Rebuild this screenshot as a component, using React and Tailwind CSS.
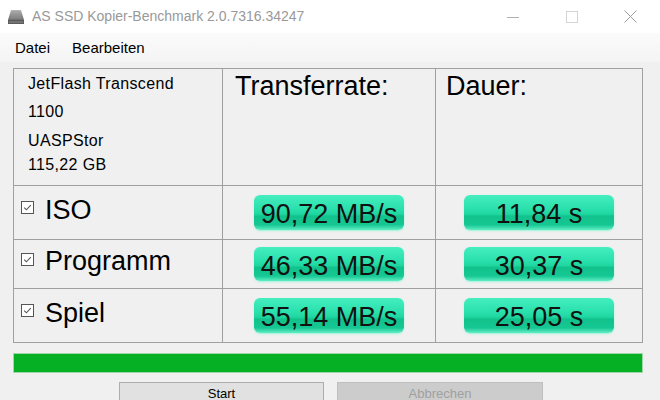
import React from "react";

const F = { fontFamily: '"Liberation Sans", Arial, sans-serif' };

function Check() {
  return (
    <svg width="13" height="13" viewBox="0 0 13 13" className="shrink-0 mb-[10px]">
      <rect x="0.5" y="0.5" width="12" height="12" fill="#ffffff" stroke="#555555" />
      <path d="M3.2 6.6 L5.4 8.8 L9.8 4.2" fill="none" stroke="#555555" strokeWidth="1.1" />
    </svg>
  );
}

function Pill({ children, h = "h-[35px]" }) {
  return (
    <div
      className={`w-[150px] ${h} rounded-[6px] flex items-center justify-center pt-[4px] text-[27px] leading-none text-[#111] whitespace-nowrap bg-[linear-gradient(to_bottom,#45eebf_0%,#2ae0ac_40%,#1fd6a0_55%,#12c28c_60%,#15c792_85%,#5fedc4_100%)] shadow-[0_1px_2px_#9ff3da]`}
    >
      {children}
    </div>
  );
}

function RowLabel({ text }) {
  return (
    <div className="bg-[#f0f0f0] flex items-center pl-[7px] gap-[11px]">
      <Check />
      <span className="text-[27px] leading-none text-black mb-[5px]">{text}</span>
    </div>
  );
}

function Cell({ children }) {
  return <div className="bg-[#f0f0f0] flex items-center justify-center">{children}</div>;
}

export default function App() {
  return (
    <div className="w-[660px] h-[400px] bg-[#f0f0f0] overflow-hidden flex flex-col" style={F}>
      {/* Title bar */}
      <div className="h-[33px] bg-white flex items-center shrink-0">
        <svg width="18" height="16" viewBox="0 0 18 16" className="ml-[7px]">
          <defs>
            <linearGradient id="ic" x1="0" y1="0" x2="0" y2="1">
              <stop offset="0" stopColor="#b5b5b5" />
              <stop offset="1" stopColor="#6e6e6e" />
            </linearGradient>
          </defs>
          <path d="M4 1 L14 1 L17 11 L1 11 Z" fill="url(#ic)" />
          <path d="M1 11 L17 11 L17 15 L1 15 Z" fill="#5c5c5c" />
          <path d="M5 3 L13 3 M4.5 5 L13.5 5 M4 7 L14 7 M3.5 9 L14.5 9" stroke="#9a9a9a" strokeWidth="0.6" />
          <rect x="2" y="12.5" width="14" height="1" fill="#8a8a8a" />
        </svg>
        <span className="ml-[7px] text-[14px] text-[#999999] whitespace-nowrap">
          AS SSD Kopier-Benchmark 2.0.7316.34247
        </span>
        <div className="ml-auto flex h-full">
          <div className="w-[58px] h-full flex items-center justify-center">
            <svg width="12" height="12" viewBox="0 0 12 12">
              <path d="M0 6.5 H12" stroke="#b0b0b0" strokeWidth="1" />
            </svg>
          </div>
          <div className="w-[59px] h-full flex items-center justify-center">
            <svg width="12" height="12" viewBox="0 0 12 12">
              <rect x="0.5" y="0.5" width="11" height="11" fill="none" stroke="#d4d4d4" />
            </svg>
          </div>
          <div className="w-[59px] h-full flex items-center justify-center">
            <svg width="13" height="13" viewBox="0 0 13 13">
              <path d="M0.5 0.5 L12.5 12.5 M12.5 0.5 L0.5 12.5" stroke="#9c9c9c" strokeWidth="1" />
            </svg>
          </div>
        </div>
      </div>

      {/* Menu bar */}
      <div className="h-[29px] shrink-0 bg-[linear-gradient(to_bottom,#fbfbfb,#f4f4f4)] flex items-center pt-[2px] text-[15px] text-black">
        <span className="ml-[15px]">Datei</span>
        <span className="ml-[22px]">Bearbeiten</span>
      </div>

      {/* Table */}
      <div className="mt-[6px] ml-[13px] w-[630px] border border-[#a0a0a0] bg-[#a0a0a0] grid grid-cols-[208px_212px_206px] grid-rows-[116px_53px_48px_53px] gap-px shrink-0">
        <div className="bg-[#f0f0f0] pl-[14px] pt-[5px] text-[16px] text-black tracking-[0.35px]">
          <div className="h-[20px] leading-[20px]">JetFlash Transcend</div>
          <div className="h-[20px] leading-[20px] mt-[8px]">1100</div>
          <div className="h-[20px] leading-[20px] mt-[9px]">UASPStor</div>
          <div className="h-[20px] leading-[20px] mt-[4px]">115,22 GB</div>
        </div>
        <div className="bg-[#f0f0f0] pl-[12px] pt-[4px] text-[27px] leading-none text-black">
          Transferrate:
        </div>
        <div className="bg-[#f0f0f0] pl-[10px] pt-[4px] text-[27px] leading-none text-black">
          Dauer:
        </div>

        <RowLabel text="ISO" />
        <Cell><Pill>90,72 MB/s</Pill></Cell>
        <Cell><Pill>11,84 s</Pill></Cell>

        <RowLabel text="Programm" />
        <Cell><Pill h="h-[34px]">46,33 MB/s</Pill></Cell>
        <Cell><Pill h="h-[34px]">30,37 s</Pill></Cell>

        <RowLabel text="Spiel" />
        <Cell><Pill>55,14 MB/s</Pill></Cell>
        <Cell><Pill>25,05 s</Pill></Cell>
      </div>

      {/* Progress bar */}
      <div className="mt-[10px] ml-[13px] w-[630px] h-[20px] border border-[#9fd8a8] bg-[#06b025] shrink-0" />

      {/* Buttons */}
      <div className="mt-[9px] ml-[119px] flex gap-[13px] shrink-0">
        <div className="w-[205px] h-[24px] border border-[#adadad] bg-[#e1e1e1] flex items-center justify-center text-[13px] text-black">
          Start
        </div>
        <div className="w-[206px] h-[24px] border border-[#bfbfbf] bg-[#cccccc] flex items-center justify-center text-[13px] text-[#a0a0a0]">
          Abbrechen
        </div>
      </div>
    </div>
  );
}
